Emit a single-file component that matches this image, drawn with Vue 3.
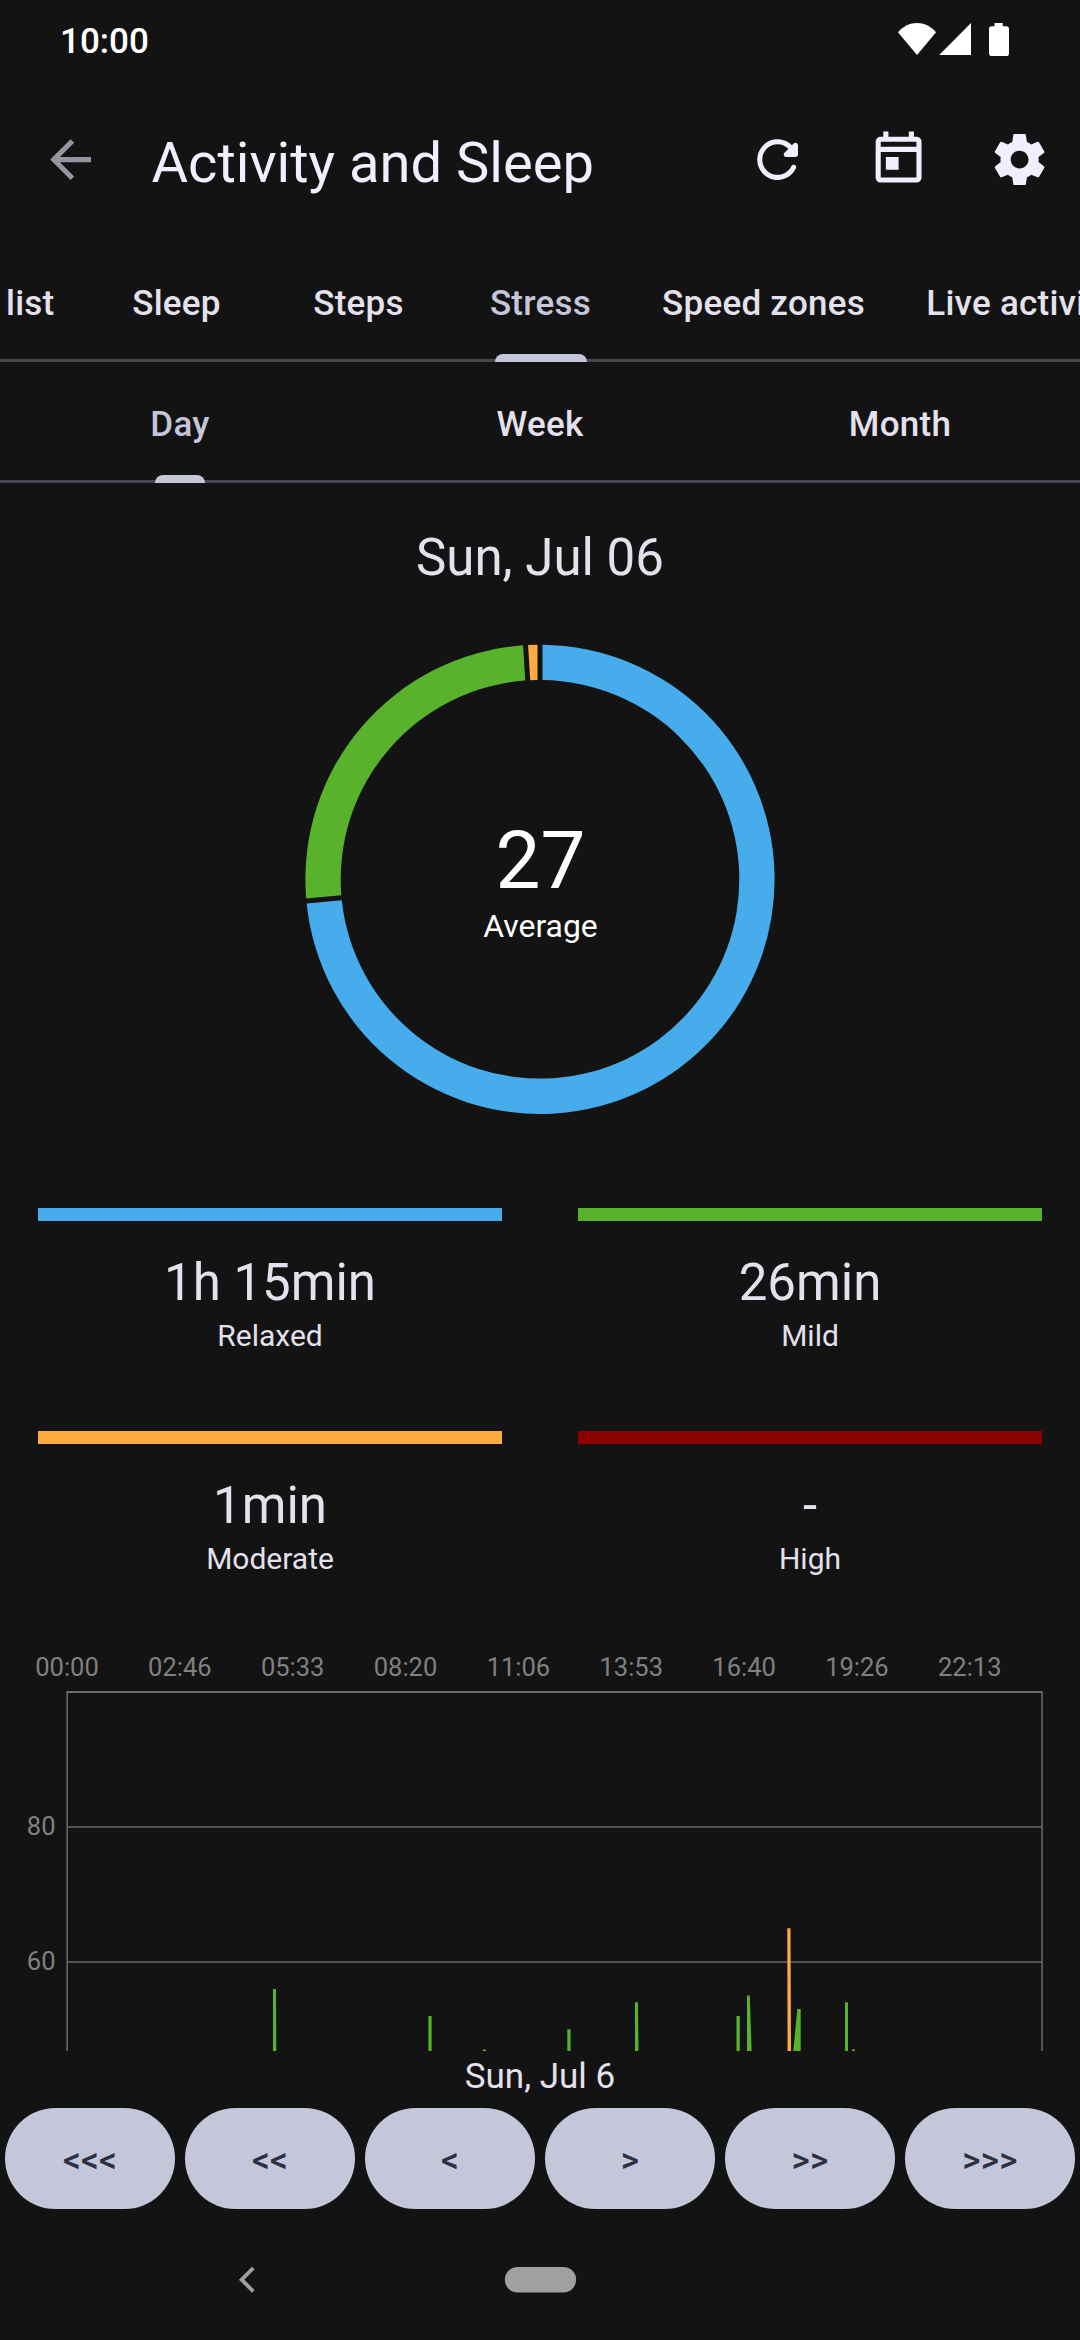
<script setup>
const tabs = ['Sleep', 'Steps', 'Stress', 'Speed zones', 'Live activities']
const ranges = ['Day', 'Week', 'Month']

const stats = [
  { value: '1h 15min', label: 'Relaxed', tone: 'relaxed' },
  { value: '26min', label: 'Mild', tone: 'mild' },
  { value: '1min', label: 'Moderate', tone: 'moderate' },
  { value: '-', label: 'High', tone: 'high' },
]

// Donut: minutes per stress zone, drawn clockwise from twelve o'clock
const CX = 540
const CY = 240.3
const OUTER = 234.6
const INNER = 199.3
const zones = [
  { minutes: 75, tone: 'relaxed' },
  { minutes: 26, tone: 'mild' },
  { minutes: 1, tone: 'moderate' },
]
const total = zones.reduce((sum, z) => sum + z.minutes, 0)
const point = (r, a) => `${(CX + r * Math.sin(a)).toFixed(2)} ${(CY - r * Math.cos(a)).toFixed(2)}`
const GAP = 2.5
let start = 0
const slices = zones.map((z) => {
  const end = start + (z.minutes / total) * Math.PI * 2
  const large = end - start > Math.PI ? 1 : 0
  const go = GAP / OUTER
  const gi = GAP / INNER
  const d =
    `M${point(OUTER, start + go)} A${OUTER} ${OUTER} 0 ${large} 1 ${point(OUTER, end - go)} ` +
    `L${point(INNER, end - gi)} A${INNER} ${INNER} 0 ${large} 0 ${point(INNER, start + gi)}Z`
  start = end
  return { d, tone: z.tone }
})

const times = ['00:00', '02:46', '05:33', '08:20', '11:06', '13:53', '16:40', '19:26', '22:13']
const gridLines = [
  { label: '80', y: 173 },
  { label: '60', y: 308 },
]
const spikes = [
  { points: '273,335 276,335 276.3,397 273,397', tone: 'mild' },
  { points: '428.4,362 431.6,362 431.6,397 428.4,397', tone: 'mild' },
  { points: '482.8,395.4 485.8,395.4 486,397 482.8,397', tone: 'mild' },
  { points: '567.3,375.2 570.5,375.2 570.5,397 567.3,397', tone: 'mild' },
  { points: '635,348.3 638,348.3 638.5,397 635,397', tone: 'mild' },
  { points: '736.5,362 739.8,362 739.8,397 736.5,397', tone: 'mild' },
  { points: '747,341.5 749.8,341.5 751.6,397 747,397', tone: 'mild' },
  { points: '787.3,274.2 790.5,274.2 791,397 787.6,397', tone: 'moderate' },
  { points: '797.3,355 800.7,355 800.7,397 793.3,397', tone: 'mild' },
  { points: '845,348.3 848,348.3 848,397 845,397', tone: 'mild' },
  { points: '852,395.4 855,395.4 855,397 852,397', tone: 'mild' },
]

const steps = ['<<<', '<<', '<', '>', '>>', '>>>']
</script>

<template>
  <div class="screen">
    <div class="status">
      <span class="clock">10:00</span>
      <svg class="indicators" width="112" height="34" viewBox="0 0 112 34">
        <path d="M0 9.2C5.2 3.2 12 0 19 0s13.800 3.200 19 9.200L19 32Z" />
        <path d="M41.200 32 73 0v32Z" />
        <path d="M93 3.200h3.500V0h8.200v3.200h3.500q2.800 0 2.800 2.800v24.200q0 2.800-2.800 2.800H93.800q-2.800 0-2.800-2.800V6q0-2.800 2.800-2.800Z" />
      </svg>
    </div>

    <header class="appbar">
      <svg class="icon back" viewBox="0 0 24 24"><path d="M20 11H7.830l5.590-5.590L12 4l-8 8 8 8 1.410-1.410L7.830 13H20v-2z" /></svg>
      <h1>Activity and Sleep</h1>
      <div class="actions">
        <svg class="icon" viewBox="0 0 24 24"><path d="M17.650 6.350c-1.630-1.630-3.940-2.570-6.480-2.310-3.670.37-6.690 3.350-7.100 7.020C3.520 15.910 7.270 20 12 20c3.190 0 5.930-1.870 7.210-4.560.32-.67-.16-1.440-.9-1.440-.37 0-.72.2-.88.53-1.130 2.430-3.840 3.970-6.800 3.310-2.220-.49-4.010-2.300-4.480-4.520C5.310 9.440 8.260 6 12 6c1.660 0 3.140.69 4.220 1.780l-1.510 1.510c-.63.63-.19 1.710.7 1.710H19c.55 0 1-.45 1-1V6.410c0-.89-1.080-1.340-1.710-.71l-.64.65z" /></svg>
        <svg class="icon" viewBox="0 0 24 24"><path d="M19 3h-1V1h-2v2H8V1H6v2H5c-1.110 0-1.990.9-1.990 2L3 19c0 1.100.89 2 2 2h14c1.100 0 2-.9 2-2V5c0-1.100-.9-2-2-2zm0 16H5V9h14v10zm0-12H5V5h14v2zM7 11h5v5H7z" /></svg>
        <svg class="icon" viewBox="0 0 24 24"><path d="M19.430 12.980c.04-.32.07-.64.07-.98s-.03-.66-.07-.98l2.110-1.650c.19-.15.24-.42.12-.64l-2-3.460c-.12-.22-.39-.3-.61-.22l-2.490 1c-.52-.4-1.080-.73-1.690-.98l-.38-2.650C14.460 2.180 14.250 2 14 2h-4c-.25 0-.46.18-.49.42l-.38 2.650c-.61.25-1.170.59-1.690.98l-2.490-1c-.23-.09-.49 0-.61.22l-2 3.460c-.13.22-.07.49.12.64l2.110 1.650c-.04.32-.07.65-.07.98s.03.66.07.98l-2.110 1.650c-.19.15-.24.42-.12.64l2 3.460c.12.22.39.3.61.22l2.490-1c.52.4 1.080.73 1.690.98l.38 2.650c.03.24.24.42.49.42h4c.25 0 .46-.18.49-.42l.38-2.650c.61-.25 1.170-.59 1.690-.98l2.490 1c.23.09.49 0 .61-.22l2-3.460c.12-.22.07-.49-.12-.64l-2.110-1.650zM12 15.500c-1.930 0-3.500-1.570-3.500-3.500s1.570-3.500 3.500-3.500 3.500 1.570 3.500 3.500-1.570 3.500-3.500 3.500z" /></svg>
      </div>
    </header>

    <nav class="tabs">
      <span class="tab first">list</span>
      <span v-for="t in tabs" :key="t" class="tab" :class="{ active: t === 'Stress' }">{{ t }}</span>
    </nav>
    <nav class="ranges">
      <span v-for="r in ranges" :key="r" class="range" :class="{ active: r === 'Day' }">{{ r }}</span>
    </nav>

    <main class="content">
      <h2>Sun, Jul 06</h2>
      <svg class="donut" width="1080" height="480" viewBox="0 0 1080 480">
        <path v-for="s in slices" :key="s.tone" :d="s.d" :class="s.tone" />
        <text class="average" x="540.500" y="249">27</text>
        <text class="caption" x="540.500" y="298">Average</text>
      </svg>

      <section class="stats">
        <div v-for="s in stats" :key="s.label" class="stat">
          <div class="bar" :class="s.tone"></div>
          <div class="value">{{ s.value }}</div>
          <div class="label">{{ s.label }}</div>
        </div>
      </section>

      <svg class="chart" width="1080" height="407" viewBox="0 -10 1080 407">
        <text v-for="(t, i) in times" :key="t" class="axis mid" :x="67 + i * 112.85" y="22">{{ t }}</text>
        <g v-for="g in gridLines" :key="g.label">
          <text class="axis end" x="55.500" :y="g.y + 7.500">{{ g.label }}</text>
          <rect class="grid" x="67" :y="g.y - 1" width="975" height="2" />
        </g>
        <rect class="frame" x="66.500" y="37" width="976" height="2" />
        <rect class="frame" x="66.400" y="38" width="1.500" height="359" />
        <rect class="frame" x="1041.300" y="38" width="1.500" height="359" />
        <polygon v-for="(s, i) in spikes" :key="i" :points="s.points" :class="s.tone" />
      </svg>
    </main>

    <footer class="pager">
      <div class="day">Sun, Jul 6</div>
      <div class="buttons">
        <button v-for="s in steps" :key="s">{{ s }}</button>
      </div>
    </footer>

    <div class="sysnav">
      <svg width="1080" height="131" viewBox="0 0 1080 131">
        <path class="chevron" d="M253.300 59 241.600 70.700l11.700 11.700" />
        <rect class="pill" x="504.800" y="58" width="71.400" height="25.600" rx="12.800" />
      </svg>
    </div>
  </div>
</template>

<style>
body {
  background: #131313;
}
</style>

<style scoped>
.screen {
  width: 1080px;
  height: 2340px;
  overflow: hidden;
  display: flex;
  flex-direction: column;
  background: #131313;
  color: #e4e1ec;
  font-family: Roboto, sans-serif;
}
svg {
  display: block;
}
h1,
h2 {
  margin: 0;
  font-weight: 400;
}
.status {
  height: 81px;
  flex: none;
  display: flex;
  justify-content: space-between;
  padding: 0 70px 0 60px;
  box-sizing: border-box;
  color: #fff;
}
.clock {
  font-size: 35px;
  font-weight: 500;
  line-height: 83px;
}
.indicators {
  margin-top: 23px;
  fill: #fff;
}
.appbar {
  height: 158px;
  flex: none;
  display: flex;
  align-items: center;
  padding: 0 30px 1px 40.200px;
  box-sizing: border-box;
  color: #efefff;
}
.icon {
  width: 61.200px;
  height: 61.200px;
  fill: #efefff;
}
.back {
  fill: #96949e;
}
h1 {
  margin-left: 50.100px;
  font-size: 56.100px;
  line-height: 68px;
  padding-top: 7px;
  white-space: nowrap;
}
.actions {
  margin-left: auto;
  display: flex;
  gap: 59.700px;
}
.tabs,
.ranges {
  flex: none;
  display: flex;
  box-sizing: border-box;
  border-bottom: 3px solid #47464f;
  font-size: 35px;
  font-weight: 500;
  letter-spacing: 0.250px;
}
.tabs {
  height: 123px;
}
.ranges {
  height: 121px;
}
.tab {
  flex: none;
  min-width: 182px;
  padding: 0 30.600px;
  box-sizing: border-box;
  text-align: center;
  line-height: 130px;
  height: 123px;
  position: relative;
  white-space: nowrap;
}
.tab.first {
  min-width: 0;
  width: 85.500px;
  padding: 0 0 0 6px;
  text-align: left;
}
.range {
  flex: 1;
  height: 121px;
  line-height: 126px;
  text-align: center;
  position: relative;
}
.active {
  color: #c4c6d9;
}
.active::after {
  content: '';
  position: absolute;
  left: 50%;
  bottom: 0;
  height: 8px;
  width: 92px;
  transform: translateX(-50%);
  border-radius: 8px 8px 0 0;
  background: #c4c6d9;
}
.range.active::after {
  width: 50px;
}
.content {
  height: 1568px;
  flex: none;
  overflow: hidden;
}
h2 {
  margin-top: 43px;
  font-size: 51px;
  line-height: 63px;
  text-align: center;
}
.donut {
  margin-top: 50px;
}
.average,
.caption {
  fill: #fff;
  text-anchor: middle;
}
.average {
  font-size: 80px;
}
.caption {
  font-size: 31.900px;
}
.stats {
  margin-top: 89px;
  display: grid;
  grid-template-columns: 1fr 1fr;
  grid-auto-rows: 223px;
}
.stat {
  padding: 0 38px;
  text-align: center;
}
.bar {
  height: 13px;
}
.value {
  margin-top: 30px;
  font-size: 51px;
  line-height: 63px;
}
.label {
  margin-top: 4px;
  font-size: 30px;
  line-height: 36px;
}
.relaxed {
  background: #46aceb;
  fill: #46aceb;
}
.mild {
  background: #59b22c;
  fill: #59b22c;
}
.moderate {
  background: #ffab40;
  fill: #ffab40;
}
.high {
  background: #8b0000;
}
.chart {
  margin-top: -10px;
}
.axis {
  font-size: 25.500px;
  fill: #808080;
}
.mid {
  text-anchor: middle;
}
.end {
  text-anchor: end;
}
.grid {
  fill: #525252;
}
.frame {
  fill: #6c6c6c;
}
.pager {
  height: 158px;
  flex: none;
}
.day {
  height: 57px;
  font-size: 35px;
  line-height: 52px;
  text-align: center;
}
.buttons {
  display: flex;
  gap: 10px;
  padding: 0 5px;
}
button {
  flex: 1;
  height: 101px;
  padding: 4px 0 0;
  border: 0;
  border-radius: 50.500px;
  background: #c4c6d9;
  color: #2d303e;
  font: 500 35px Roboto, sans-serif;
  letter-spacing: 0.250px;
}
.sysnav {
  height: 131px;
  flex: none;
}
.chevron {
  fill: none;
  stroke: #a0a0a0;
  stroke-width: 3.800;
}
.pill {
  fill: #a0a0a0;
}
</style>
